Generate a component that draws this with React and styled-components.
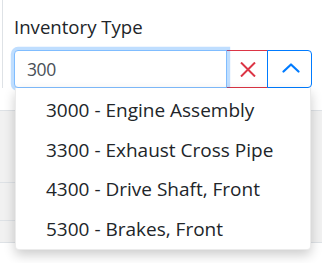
import styled, { createGlobalStyle } from "styled-components";

const GlobalStyle = createGlobalStyle`
    html, body {
        margin: 0;
        padding: 0;
        background: #fff;
    }
    body {
        font-family: "Open Sans", "Noto Sans", sans-serif;
        color: #212529;
    }
    * { box-sizing: border-box; }
`;

const options = [
    "3000 - Engine Assembly",
    "3300 - Exhaust Cross Pipe",
    "4300 - Drive Shaft, Front",
    "5300 - Brakes, Front",
];

function XIcon() {
    return (
        <svg width="16" height="15" viewBox="0 0 16 15">
            <path d="M1 0.5 L15 14.5 M15 0.5 L1 14.5" stroke="#dc3545" strokeWidth="2" fill="none" />
        </svg>
    );
}

function ChevronUp() {
    return (
        <svg width="18" height="10" viewBox="0 0 18 10">
            <path d="M1.5 8.5 L9 1.5 L16.5 8.5" stroke="#007bff" strokeWidth="2.2" strokeLinecap="round" strokeLinejoin="round" fill="none" />
        </svg>
    );
}

export default function App() {
    return (
        <Page>
            <GlobalStyle />
            <Panel>
                <Label>Inventory Type</Label>
                <Group>
                    <Input value="300" readOnly />
                    <ClearButton><XIcon /></ClearButton>
                    <ToggleButton><ChevronUp /></ToggleButton>
                    <Menu>
                        {options.map((o) => (
                            <Item key={o}>{o}</Item>
                        ))}
                    </Menu>
                </Group>
            </Panel>
            <Table>
                <Band>
                    <SideCell>
                        <SubRow />
                        <SubRow />
                        <SubRow />
                    </SideCell>
                    <MainCell />
                </Band>
            </Table>
        </Page>
    );
}

const Page = styled.div`
    width: 322px;
    height: 263px;
    overflow: hidden;
    background: #fff;
`;

const Panel = styled.div`
    margin-left: 2px;
    border-left: 1px solid #dee2e6;
    padding: 15px 10px 0 11px;
    height: 88px;
`;

const Label = styled.div`
    font-size: 18.6px;
    line-height: 24px;
    margin-bottom: 11px;
    color: #212529;
`;

const Group = styled.div`
    position: relative;
    display: flex;
    width: 298px;
    height: 38px;
`;

const Input = styled.input`
    position: relative;
    z-index: 3;
    width: 213px;
    height: 38px;
    padding: 0 12px;
    border: 1px solid #80bdff;
    border-radius: 4px 0 0 4px;
    box-shadow: 0 0 0 3.2px rgba(0, 123, 255, 0.25);
    font-family: inherit;
    font-size: 17.5px;
    letter-spacing: -0.4px;
    color: #495057;
    outline: none;
    background: #fff;
`;

const ClearButton = styled.button`
    display: flex;
    align-items: center;
    justify-content: center;
    width: 42px;
    height: 38px;
    margin-left: -1px;
    padding: 0 0 0 2px;
    border: 1px solid #dc3545;
    background: #fff;
    border-radius: 0;
`;

const ToggleButton = styled.button`
    display: flex;
    align-items: center;
    justify-content: center;
    width: 45px;
    height: 38px;
    margin-left: -1px;
    padding: 0 0 2px 3px;
    border: 1px solid #007bff;
    background: #fff;
    border-radius: 0 4px 4px 0;
`;

const Menu = styled.div`
    position: absolute;
    z-index: 5;
    top: 38px;
    left: 1px;
    width: 296px;
    padding: 3px 0 0;
    background: #fff;
    border: 1px solid rgba(0, 0, 0, 0.08);
    border-top: none;
    border-radius: 0 0 4px 4px;
    box-shadow: 0 5px 12px rgba(0, 0, 0, 0.2);
`;

const Item = styled.div`
    height: 39.5px;
    line-height: 39.5px;
    padding-left: 30px;
    font-size: 19px;
    color: #212529;
    white-space: nowrap;
`;

const Table = styled.div`
    margin-top: 22px;
    border-top: 1px solid #dee2e6;
    border-bottom: 1px solid #dee2e6;
`;

const Band = styled.div`
    display: flex;
    height: 131px;
    background: #f1f1f1;
`;

const SideCell = styled.div`
    width: 15px;
    display: grid;
    grid-template-rows: 72px 38px 1fr;
`;

const SubRow = styled.div`
    border-bottom: 1px solid #dee2e6;
    &:last-child { border-bottom: none; }
`;

const MainCell = styled.div`
    flex: 1;
`;
